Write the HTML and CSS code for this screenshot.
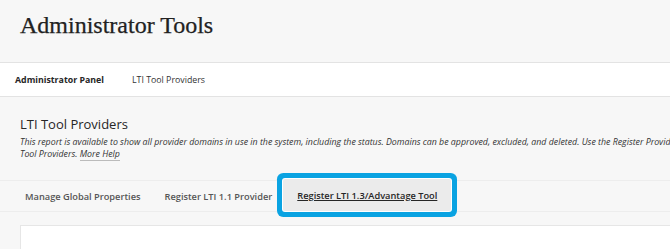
FILE: index.html
```html
<!DOCTYPE html>
<html lang="en">
<head>
<meta charset="utf-8">
<title>Administrator Tools</title>
<link rel="stylesheet" href="styles.css">
</head>
<body>
<header class="page-header">
  <h1 class="page-title">Administrator Tools</h1>
</header>
<nav class="breadcrumbs">
  <span class="crumb crumb-current">Administrator Panel</span>
  <span class="crumb">LTI Tool Providers</span>
</nav>
<main class="content">
  <section class="intro">
    <h2 class="section-title">LTI Tool Providers</h2>
    <p class="description">This report is available to show all provider domains in use in the system, including the status. Domains can be approved, excluded, and deleted. Use the Register Provider Domain page to add<br>Tool Providers. <a class="help-link" href="#">More Help</a></p>
  </section>
  <div class="tabs">
    <span class="tab">Manage Global Properties</span>
    <span class="tab">Register LTI 1.1 Provider</span>
    <span class="tab tab-active">Register LTI 1.3/Advantage Tool</span>
  </div>
  <div class="panel"></div>
</main>
</body>
</html>
```
FILE: styles.css
```css
html, body {
  margin: 0;
  padding: 0;
}
body {
  background: #f7f7f7;
  font-family: "Open Sans", "Noto Sans", sans-serif;
  color: #262626;
  overflow: hidden;
  width: 670px;
  height: 249px;
}
.page-header {
  box-sizing: border-box;
  height: 63px;
  border-bottom: 1px solid #e3e3e3;
  padding-left: 20px;
}
.page-title {
  margin: 0;
  padding-top: 10px;
  font-family: "Liberation Serif", "Times New Roman", serif;
  font-weight: 400;
  font-size: 24px;
  line-height: 30px;
  color: #222;
  -webkit-text-stroke: 0.25px #222;
}
.breadcrumbs {
  background: #fff;
  height: 33px;
  border-bottom: 1px solid #e3e3e3;
  display: flex;
  align-items: center;
  gap: 28px;
  padding-left: 15px;
  font-size: 8.8px;
}
.crumb { color: #333; }
.crumb-current { font-weight: 700; color: #262626; }
.content {
  padding-top: 18px;
}
.intro {
  padding: 0 20px;
}
.section-title {
  margin: 0;
  font-size: 13px;
  font-weight: 400;
  line-height: 18px;
  color: #262626;
}
.description {
  margin: 3px 0 0;
  font-size: 8.8px;
  font-style: italic;
  line-height: 12px;
  color: #333;
  white-space: nowrap;
}
.help-link {
  color: #333;
  text-decoration: none;
  border-bottom: 1px solid #bbb;
}
.tabs {
  margin-top: 20px;
  height: 30px;
  border-top: 1px solid #ededed;
  border-bottom: 1px solid #ededed;
  display: flex;
  align-items: stretch;
  padding-left: 13px;
}
.tab {
  display: flex;
  align-items: center;
  padding: 0 12px;
  font-size: 9.25px;
  font-weight: 600;
  color: #555;
}
.tab-active {
  margin: -2px 0 0 -1px;
  padding: 0 14px;
  background: #ebebeb;
  color: #262626;
  text-decoration: underline;
  box-shadow: 0 0 0 1px #fff, 0 0 0 6px #0aa3e2;
  border-radius: 2px;
}
.panel {
  margin: 13px 0 0 20px;
  height: 40px;
  background: #fff;
  border: 1px solid #e6e6e6;
  border-right: none;
}
```
